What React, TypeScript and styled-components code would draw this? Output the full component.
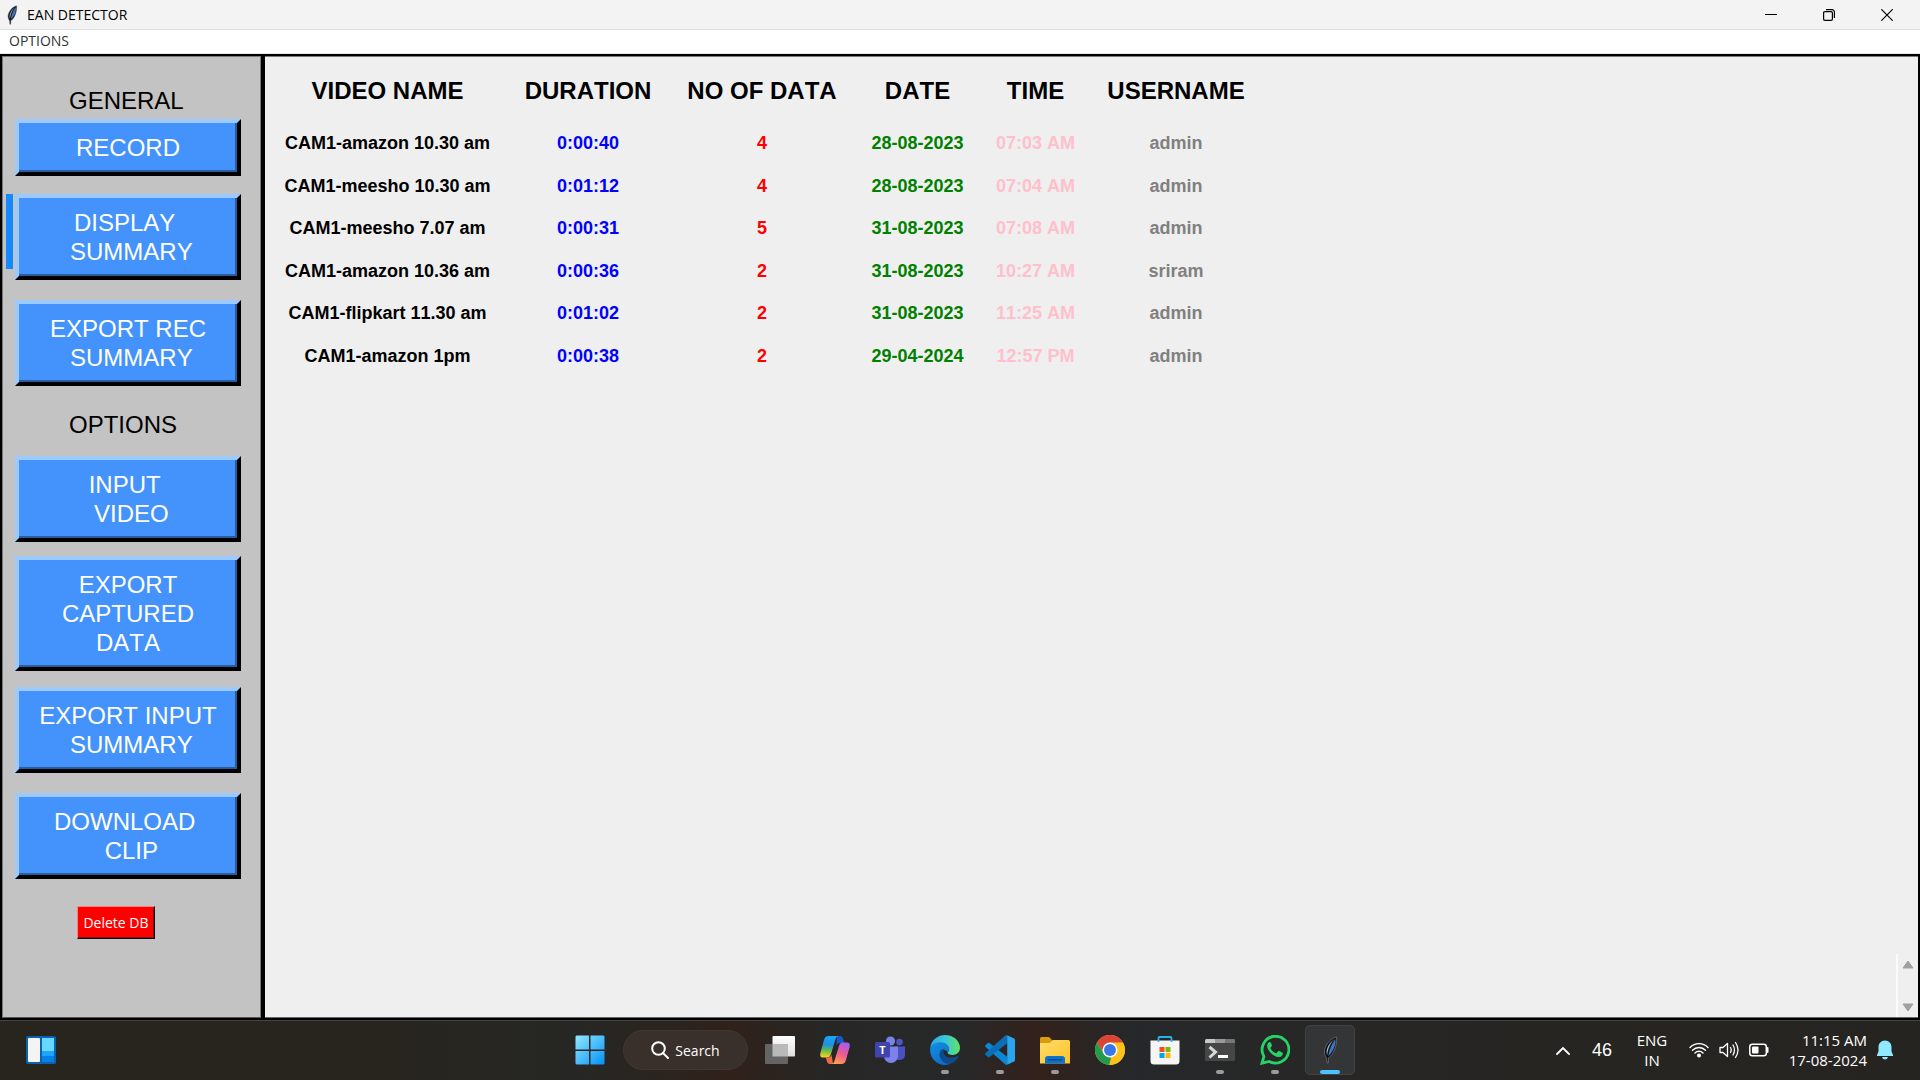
import React from "react";
import styled, { createGlobalStyle } from "styled-components";

const uiFont = `"Open Sans", "Noto Sans", sans-serif`;
const tkFont = `"Liberation Sans", Arial, sans-serif`;

const GlobalStyle = createGlobalStyle`
  * { box-sizing: border-box; }
  body { margin: 0; background: #000; font-family: ${uiFont}; font-kerning: none; }
  button { font: inherit; font-kerning: none; margin: 0; padding: 0; border: 0; background: none; color: inherit; }
  svg { display: block; }
`;

const Screen = styled.div`
  min-height: 100vh;
  display: grid;
  grid-template-rows: auto auto 1fr auto;
`;

/* ---------- window frame ---------- */

const TitleBar = styled.header`
  display: flex;
  align-items: center;
  height: 30px;
  padding: 0 4px 0 6px;
  background: #f3f3f3;
  border-bottom: 1px solid #dedede;
`;

const Title = styled.h1`
  flex: 1;
  margin: 0 0 0 9px;
  font-size: 14px;
  font-weight: 400;
  line-height: 28px;
  color: #000;
`;

const WindowButton = styled.button`
  width: 58px;
  height: 28px;
  display: grid;
  place-items: center;
`;

const MenuBar = styled.nav`
  display: flex;
  align-items: flex-start;
  height: 24px;
  padding-left: 9px;
  background: #fff;
  border-bottom: 1px solid #e8e8e8;
`;

const MenuItem = styled.button`
  font-size: 14px;
  line-height: 22px;
  color: #333;
`;

const Workspace = styled.div`
  display: flex;
  gap: 4px;
  padding: 2px;
  background: #000;
`;

/* ---------- sidebar ---------- */

const Sidebar = styled.aside`
  width: 259px;
  padding: 29px 0 0 3px;
  background: #c3c3c3;
  border: 1px solid #7a7a7a;
  border-bottom-color: #555;
  font-family: ${tkFont};
`;

const GroupTitle = styled.h2<{ $above: number; $below: number }>`
  margin: ${(p) => p.$above}px 0 ${(p) => p.$below}px 63px;
  font-size: 24px;
  font-weight: 400;
  line-height: 29px;
  color: #000;
`;

const ActionRow = styled.div<{ $below: number }>`
  display: flex;
  align-items: flex-start;
  gap: 2px;
  margin-bottom: ${(p) => p.$below}px;
`;

const Indicator = styled.span<{ $active?: boolean }>`
  width: 7px;
  height: 75px;
  margin-bottom: -20px;
  background: ${(p) => (p.$active ? "#158aff" : "transparent")};
`;

const ActionButton = styled.button`
  width: 226px;
  padding: 10px 0;
  border: 4px solid;
  border-color: #9ccaff #000 #000 #9ccaff;
  box-shadow: inset -2px -2px 0 #2b5c9e;
  background: #4492fb;
  color: #fff;
  font-size: 24px;
  line-height: 29px;
  text-align: center;
  white-space: pre;
`;

const DeleteButton = styled.button`
  margin-left: 71px;
  width: 78px;
  height: 33px;
  border: 1px solid;
  border-color: #ff8080 #000 #000 #ff8080;
  box-shadow: inset -1px -1px 0 #8a1010;
  background: #f00;
  color: #fff;
  font-family: ${uiFont};
  font-size: 14px;
  line-height: 28px;
`;

/* ---------- summary table ---------- */

const Main = styled.main`
  flex: 1;
  display: flex;
  justify-content: space-between;
  padding-left: 2px;
  background: #efefef;
  border-top: 1px solid #7a7a7a;
  border-bottom: 1px solid #666;
`;

const SummaryTable = styled.table`
  align-self: flex-start;
  width: 993px;
  height: 320px;
  table-layout: fixed;
  border-collapse: collapse;
  font-family: ${tkFont};
  text-align: center;
`;

const Column = styled.col<{ $width: number }>`
  width: ${(p) => p.$width}px;
`;

const HeadCell = styled.th`
  height: 65px;
  padding: 2px 0 0;
  font-size: 24px;
  font-weight: 700;
  line-height: 28px;
  white-space: nowrap;
  color: #000;
`;

const Cell = styled.td<{ $color: string }>`
  padding: 0;
  font-size: 18px;
  font-weight: 700;
  line-height: 22px;
  white-space: nowrap;
  color: ${(p) => p.$color};
`;

const ScrollBar = styled.div`
  align-self: flex-end;
  display: flex;
  flex-direction: column;
  justify-content: space-between;
  width: 22px;
  height: 63px;
  padding: 6px 0 5px;
  border-left: 2px solid #fbfbfb;
`;

const ScrollButton = styled.button`
  display: grid;
  place-items: center;
`;

/* ---------- taskbar ---------- */

const TaskBar = styled.footer`
  display: grid;
  grid-template-columns: 1fr auto 1fr;
  align-items: center;
  height: 60px;
  padding-bottom: 1px;
  border-top: 1px solid #444342;
  background: linear-gradient(
    90deg,
    #28251f 0%,
    #28251f 20%,
    #262724 30%,
    #2b241f 35%,
    #31211a 38%,
    #262725 43%,
    #272829 50%,
    #33211b 54%,
    #25282a 59%,
    #272727 66%,
    #272522 80%,
    #262421 100%
  );
  color: #fff;
`;

const TaskLeft = styled.div`
  padding-left: 16px;
`;

const TaskCenter = styled.div`
  display: flex;
  gap: 5px;
`;

const TaskButton = styled.button<{ $active?: boolean }>`
  position: relative;
  width: 50px;
  height: 50px;
  display: grid;
  place-items: center;
  border-radius: 5px;
  border: 1px solid ${(p) => (p.$active ? "#424344" : "transparent")};
  background: ${(p) => (p.$active ? "#343536" : "transparent")};
`;

const RunMark = styled.span<{ $active?: boolean }>`
  position: absolute;
  bottom: 0;
  left: 50%;
  width: ${(p) => (p.$active ? 20 : 8)}px;
  height: 4px;
  border-radius: 2px;
  transform: translateX(-50%);
  background: ${(p) => (p.$active ? "#4cc2ff" : "#9b9b9b")};
`;

const SearchButton = styled.button`
  display: flex;
  align-items: center;
  justify-content: center;
  gap: 6px;
  width: 125px;
  height: 40px;
  margin: 5px 2px 5px 3px;
  border-radius: 20px;
  border: 1px solid #403732;
  background: #3a302b;
  color: #fff;
  font-size: 14px;
`;

const Tray = styled.div`
  display: flex;
  align-items: center;
  justify-content: flex-end;
  padding-right: 27px;
  font-size: 15px;
  line-height: 20px;
`;

const Count = styled.span`
  margin: 0 22px;
  font-family: ${tkFont};
  font-size: 18px;
`;

const Language = styled.button`
  width: 36px;
  margin-right: 19px;
  text-align: center;
`;

const StatusIcons = styled.button`
  display: flex;
  align-items: center;
  gap: 10px;
`;

const Clock = styled.button`
  width: 88px;
  margin: 0 10px;
  text-align: right;
`;

/* ---------- icons ---------- */

const Feather = ({ w, h }: { w: number; h: number }) => (
  <svg width={w} height={h} viewBox="0 0 16 28" aria-hidden="true">
    <path d="M14.5 1C9 2 4 8 2.500 14c-.5 3 .5 6 2 8l.5 5 1.300-.2.2-5C10 20 13 14 14 9c.6-3 .8-6 .5-8z" fill="#101318" stroke="#777b80" strokeWidth=".7" />
    <path d="M13.500 2.800C9.500 5 6.200 11 5.200 19 3 14 7.500 5.500 13.500 2.800z" fill="#9bbbd8" />
    <path d="M13.400 3.200C10 7.500 7.300 13 6.300 20c3.500-3 6-7.500 6.900-12 .3-1.800.4-3.300.2-4.800z" fill="#3f78c4" />
  </svg>
);

const Windows = () => (
  <svg width="30" height="30" viewBox="0 0 30 30" aria-hidden="true">
    <defs>
      <linearGradient id="win" gradientUnits="userSpaceOnUse" x1="2" y1="2" x2="28" y2="28">
        <stop offset="0" stopColor="#8be4ff" />
        <stop offset="1" stopColor="#0a95f8" />
      </linearGradient>
    </defs>
    <path d="M1.500.5h12.500v14H.5v-13zM15.500.5h13l1 1v13h-14zM.5 16H14v13.500H1.500l-1-1zM15.500 16h14v12.500l-1 1h-13z" fill="url(#win)" />
  </svg>
);

const Widgets = () => (
  <svg width="30" height="28" viewBox="0 0 30 28" aria-hidden="true">
    <rect width="30" height="28" rx="2" fill="#0a63b0" />
    <rect x="2" y="2" width="12" height="24" rx="1" fill="#f4f4f4" />
    <rect x="16" y="2" width="12" height="13" fill="#67d8ff" />
    <rect x="16" y="15" width="12" height="5" fill="#1ea4f8" />
    <rect x="16" y="20" width="12" height="6" fill="#087fe6" />
  </svg>
);

const Magnifier = () => (
  <svg width="18" height="18" viewBox="0 0 18 18" fill="none" stroke="#fff" strokeWidth="2" aria-hidden="true">
    <circle cx="7.500" cy="7.500" r="6.300" />
    <path d="M12 12l5 5" strokeLinecap="round" />
  </svg>
);

const TaskView = () => (
  <svg width="30" height="28" viewBox="0 0 30 28" aria-hidden="true">
    <defs>
      <linearGradient id="tv" x1="0" y1="0" x2="0" y2="1">
        <stop offset="0" stopColor="#fff" />
        <stop offset="1" stopColor="#dedede" />
      </linearGradient>
    </defs>
    <rect x="7.500" y="0" width="22.500" height="20.500" rx="1" fill="url(#tv)" />
    <rect x="0" y="8" width="23" height="20" rx="1" fill="#646464" />
    <rect x="7.500" y="8" width="15.500" height="12.500" fill="#b9b9b9" />
  </svg>
);

const Copilot = () => (
  <svg width="30" height="28" viewBox="0 0 30 28" aria-hidden="true">
    <defs>
      <linearGradient id="cpA" x1=".4" y1="0" x2=".3" y2="1">
        <stop offset="0" stopColor="#16a8f5" />
        <stop offset=".4" stopColor="#1f8fe0" />
        <stop offset=".65" stopColor="#5cb85a" />
        <stop offset="1" stopColor="#ffd21a" />
      </linearGradient>
      <linearGradient id="cpB" x1=".7" y1="0" x2=".3" y2="1">
        <stop offset="0" stopColor="#a35cf0" />
        <stop offset=".5" stopColor="#ee5b8e" />
        <stop offset="1" stopColor="#ffa04a" />
      </linearGradient>
    </defs>
    <path d="M17 0h3c2 0 2.700 1.500 3.300 3.500L24.500 7H20c-2 0-3 1-3.600 3z" fill="#1b57c9" />
    <path d="M8.500 0H19c-2 0-3 1.500-3.600 3.500L11 18c-.8 2.500-2 3.500-4 3.500H3C.5 21.500-.3 19.500.4 17L4 4C4.700 1.500 6 0 8.500 0z" fill="url(#cpA)" />
    <path d="M13 28h-3c-2 0-2.700-1.500-3.300-3.500L5.700 21.500H8c2 0 3-1 3.600-3z" fill="#ef6b48" />
    <path d="M21.500 28H11c2 0 3-1.500 3.600-3.500L19 10c.8-2.500 2-3.500 4-3.500h4c2.500 0 3.300 2 2.600 4.500L26 24c-.7 2.500-2 4-4.500 4z" fill="url(#cpB)" />
  </svg>
);

const LetterMark = styled.span`
  position: absolute;
  left: 9px;
  top: 16px;
  width: 15px;
  font-size: 11px;
  font-weight: 700;
  line-height: 16px;
`;

const Teams = () => (
  <>
    <svg width="30" height="28" viewBox="0 0 30 28" aria-hidden="true">
      <circle cx="24.500" cy="6" r="3.300" fill="#4f55c4" />
      <path d="M20 10.500h10v8a5.500 5.500 0 0 1-8 5z" fill="#4a52c2" />
      <circle cx="15.500" cy="5" r="4.600" fill="#7b83eb" />
      <path d="M9 10.500h14V20a7 7 0 0 1-14 0z" fill="#7b83eb" />
      <rect x="0" y="6" width="15" height="15.500" rx="1.500" fill="#4045ae" />
    </svg>
    <LetterMark>T</LetterMark>
  </>
);

const Edge = () => (
  <svg width="30" height="30" viewBox="0 0 30 30" aria-hidden="true">
    <defs>
      <linearGradient id="edA" x1="0" y1=".3" x2="1" y2=".3">
        <stop offset="0" stopColor="#2aa7e8" />
        <stop offset=".5" stopColor="#36c6d8" />
        <stop offset="1" stopColor="#63e25e" />
      </linearGradient>
      <linearGradient id="edB" x1="0" y1="0" x2=".7" y2="1">
        <stop offset="0" stopColor="#1590de" />
        <stop offset="1" stopColor="#0b6ccb" />
      </linearGradient>
    </defs>
    <path d="M.2 13C1 5.500 7.300 0 15 0c8.500 0 15 6 15 12.800 0 4.500-3.300 7.200-7.500 7.200-3 0-5-1-5-2.200 0-.8 1.300-1.300 1.300-3.600 0-3.500-3.700-6.200-8.300-6.200C5 8 1.500 10.500.2 13z" fill="url(#edA)" />
    <path d="M.1 14C.3 10.500 5 7.300 10.500 7.300c5 0 8.700 3 8.700 6.700 0 2-1 3-1.200 3.700-.8-2-2.500-3-4.500-2-3 1.600-2.500 7.300 1.500 10.300 2.200 1.700 5 2 6.500 1.800C20 29.300 17.500 30 15 30 6.500 30-.3 23 .1 14z" fill="url(#edB)" />
    <path d="M10.600 15.500c-2.500 4-.6 9 3.200 11.700 4 2.700 8.500 1.800 11.500-1.200 1.500-1.500 2.500-3 3-4.200.2-.7-.4-1-1-.7-6 3.200-13 1-13.800-3.500-.3-1.800.5-3 1.300-3.700-1.700 0-3.200.3-4.200 1.600z" fill="#114a8b" />
  </svg>
);

const VsCode = () => (
  <svg width="30" height="30" viewBox="0 0 30 30" aria-hidden="true">
    <path d="M22.200 29.700v-7.900L4.500 8c-.5-.4-1.100-.4-1.600 0L.6 10c-.7.600-.7 1.500 0 2.100l19.700 17.300c.5.500 1.200.6 1.900.3z" fill="#0d86d3" />
    <path d="M22.200.3v7.900L4.500 22c-.5.400-1.100.4-1.600 0L.6 20c-.7-.6-.7-1.500 0-2.100L20.300.6c.5-.5 1.200-.6 1.900-.3z" fill="#0a6fb8" />
    <path d="M22.200.3L29 3.500c.6.300 1 .8 1 1.500v20c0 .7-.4 1.200-1 1.500l-6.800 3.200z" fill="#2aa5ee" />
  </svg>
);

const Folder = () => (
  <svg width="30" height="27" viewBox="0 0 30 27" aria-hidden="true">
    <defs>
      <linearGradient id="fo" x1="0" y1="0" x2="1" y2="1">
        <stop offset="0" stopColor="#ffdc6a" />
        <stop offset="1" stopColor="#ffc328" />
      </linearGradient>
    </defs>
    <path d="M0 1.500Q0 0 1.500 0H9l3.500 3.500V9H0z" fill="#d99c0c" />
    <path d="M0 6h9.500L13 3h15.500Q30 3 30 4.500V26.500H0z" fill="url(#fo)" />
    <path d="M5 26.500V22q0-3 3-3h14q3 0 3 3v4.500z" fill="#0b73cb" />
    <rect x="8" y="22" width="14" height="1.500" rx=".7" fill="#0a4a8c" />
  </svg>
);

const Chrome = () => (
  <svg width="30" height="30" viewBox="0 0 30 30" aria-hidden="true">
    <circle cx="15" cy="15" r="15" fill="#fbc116" />
    <path d="M15 15L9.100 18.600 2 7.500A15 15 0 0 1 28 7.500H15z" fill="#db4437" />
    <path d="M2 7.500l7 11.200L15 22l1 1-1.800 7A15 15 0 0 1 2 7.500z" fill="#269a4c" />
    <path d="M15 8h13.200a15 15 0 0 1-13.500 22L21 18.500z" fill="#fcc219" />
    <circle cx="15" cy="15" r="7.500" fill="#fff" />
    <circle cx="15" cy="15" r="6" fill="#3877e8" />
  </svg>
);

const Store = () => (
  <svg width="30" height="30" viewBox="0 0 30 30" aria-hidden="true">
    <path d="M.5 5.500h29V26q0 3.500-3.500 3.500H4Q.5 29.500.5 26z" fill="#f5f5f5" />
    <path d="M8.500 7V3q0-1 1-1h11q1 0 1 1v4" fill="none" stroke="#24b4ec" strokeWidth="1.800" />
    <rect x="9.500" y="12" width="5" height="5" fill="#f25022" />
    <rect x="15.500" y="12" width="5" height="5" fill="#7fba00" />
    <rect x="9.500" y="18" width="5" height="5" fill="#00a4ef" />
    <rect x="15.500" y="18" width="5" height="5" fill="#ffb900" />
  </svg>
);

const Terminal = () => (
  <svg width="30" height="22" viewBox="0 0 30 22" aria-hidden="true">
    <rect width="30" height="22" rx="1.500" fill="#464646" />
    <path d="M0 4V1.500Q0 0 1.500 0H10v4z" fill="#c8c8c8" />
    <path d="M10 0h10v4H10z" fill="#999" />
    <path d="M20 0h8.500Q30 0 30 1.500V4H20z" fill="#777" />
    <path d="M4.500 8l6 5-6 5.500" fill="none" stroke="#d7d7d7" strokeWidth="3" />
    <rect x="13" y="16" width="10" height="3" fill="#fff" />
  </svg>
);

const WhatsApp = () => (
  <svg width="30" height="30" viewBox="0 0 30 30" aria-hidden="true">
    <path d="M2 28.200l1.900-6.800A13.400 13.400 0 1 1 9 26.400z" fill="none" stroke="#25d366" strokeWidth="2.800" />
    <path d="M10.800 7.500c-.4-.8-1.500-.8-2.200 0-3.200 3.400-.4 7.800 2.200 10.500 3 3.200 8.500 6.200 11.500 2.200.8-1.200.6-2.200 0-2.600l-3-1.500c-.6-.3-1-.2-1.400.3l-1.200 1.500c-.3.400-.7.400-1.200.2-2.200-1-3.700-2.500-4.900-4.600-.2-.4-.2-.7.1-1l1-1.300c.3-.4.3-.8.100-1.200z" fill="#25d366" />
  </svg>
);

const Wifi = () => (
  <svg width="20" height="16" viewBox="0 0 20 16" fill="none" stroke="#fff" strokeWidth="1.400" strokeLinecap="round" aria-hidden="true">
    <path d="M1 5.500a12.500 12.500 0 0 1 18 0M3.500 8.300a9 9 0 0 1 13 0M6 11a5.600 5.600 0 0 1 8 0" />
    <circle cx="10" cy="13.500" r="1.300" fill="#fff" />
  </svg>
);

const Volume = () => (
  <svg width="20" height="18" viewBox="0 0 20 18" fill="none" stroke="#fff" strokeWidth="1.300" strokeLinecap="round" strokeLinejoin="round" aria-hidden="true">
    <path d="M1 6.500h3L8.500 2.500v13L4 11.500H1zM11.500 6.500q1.500 2.500 0 5M14 4q3 5 0 10M16.500 1.500q5 7.500 0 15" />
  </svg>
);

const Battery = () => (
  <svg width="20" height="14" viewBox="0 0 20 14" aria-hidden="true">
    <rect x=".8" y="1.300" width="16.500" height="11.500" rx="2.500" fill="none" stroke="#fff" strokeWidth="1.500" />
    <rect x="3" y="3.500" width="6.500" height="7" rx="1" fill="#fff" />
    <path d="M18.500 5v4" stroke="#fff" strokeWidth="2" strokeLinecap="round" />
  </svg>
);

const Bell = () => (
  <svg width="16" height="20" viewBox="0 0 16 20" aria-hidden="true">
    <path d="M8 .5c4 0 6.500 3 6.500 6.500v4.500L16 15v1H0v-1l1.500-3.500V7C1.500 3.500 4 .5 8 .5zM5 17h6q-.7 2.500-3 2.500T5 17z" fill="#8fe9ff" />
  </svg>
);

/* ---------- data ---------- */

type Action = { label: string; below: number; active?: boolean };

const generalActions: Action[] = [
  { label: "RECORD", below: 18 },
  { label: "DISPLAY \n SUMMARY", below: 20, active: true },
  { label: "EXPORT REC\n SUMMARY", below: 0 },
];

const optionActions: Action[] = [
  { label: "INPUT \n VIDEO", below: 14 },
  { label: "EXPORT\nCAPTURED\nDATA", below: 16 },
  { label: "EXPORT INPUT\n SUMMARY", below: 20 },
  { label: "DOWNLOAD \n CLIP", below: 27 },
];

const columns = [
  { title: "VIDEO NAME", width: 241, color: "#000" },
  { title: "DURATION", width: 160, color: "#0000ff" },
  { title: "NO OF DATA", width: 188, color: "#ff0000" },
  { title: "DATE", width: 123, color: "#008000" },
  { title: "TIME", width: 113, color: "#ffc0cb" },
  { title: "USERNAME", width: 168, color: "#808080" },
];

const rows = [
  ["CAM1-amazon 10.30 am", "0:00:40", "4", "28-08-2023", "07:03 AM", "admin"],
  ["CAM1-meesho 10.30 am", "0:01:12", "4", "28-08-2023", "07:04 AM", "admin"],
  ["CAM1-meesho 7.07 am", "0:00:31", "5", "31-08-2023", "07:08 AM", "admin"],
  ["CAM1-amazon 10.36 am", "0:00:36", "2", "31-08-2023", "10:27 AM", "sriram"],
  ["CAM1-flipkart 11.30 am", "0:01:02", "2", "31-08-2023", "11:25 AM", "admin"],
  ["CAM1-amazon 1pm", "0:00:38", "2", "29-04-2024", "12:57 PM", "admin"],
];

const apps = [
  { name: "Task view", icon: <TaskView />, running: false },
  { name: "Copilot", icon: <Copilot />, running: false },
  { name: "Teams", icon: <Teams />, running: false },
  { name: "Edge", icon: <Edge />, running: true },
  { name: "Visual Studio Code", icon: <VsCode />, running: true },
  { name: "File Explorer", icon: <Folder />, running: true },
  { name: "Chrome", icon: <Chrome />, running: false },
  { name: "Store", icon: <Store />, running: false },
  { name: "Terminal", icon: <Terminal />, running: true },
  { name: "WhatsApp", icon: <WhatsApp />, running: true },
  { name: "EAN Detector", icon: <Feather w={16} h={28} />, running: true, active: true },
];

const ActionList = ({ actions }: { actions: Action[] }) => (
  <>
    {actions.map((a) => (
      <ActionRow key={a.label} $below={a.below}>
        <Indicator $active={a.active} />
        <ActionButton type="button">{a.label}</ActionButton>
      </ActionRow>
    ))}
  </>
);

export default function App() {
  return (
    <Screen>
      <GlobalStyle />
      <TitleBar>
        <Feather w={12} h={20} />
        <Title>EAN DETECTOR</Title>
        <WindowButton type="button" aria-label="Minimize">
          <svg width="12" height="12" viewBox="0 0 12 12" stroke="#000"><path d="M0 5.500h12" /></svg>
        </WindowButton>
        <WindowButton type="button" aria-label="Restore">
          <svg width="12" height="12" viewBox="0 0 12 12" fill="none" stroke="#000" strokeWidth="1.200">
            <rect x=".6" y="2.600" width="8.800" height="8.800" rx="1.300" />
            <path d="M3 .6h6a2.400 2.400 0 0 1 2.400 2.400v6" />
          </svg>
        </WindowButton>
        <WindowButton type="button" aria-label="Close">
          <svg width="12" height="12" viewBox="0 0 12 12" stroke="#000" strokeWidth="1.200"><path d="M.3.3l11.400 11.400M11.700.3L.3 11.700" /></svg>
        </WindowButton>
      </TitleBar>
      <MenuBar>
        <MenuItem type="button">OPTIONS</MenuItem>
      </MenuBar>
      <Workspace>
        <Sidebar>
          <GroupTitle $above={0} $below={4}>GENERAL</GroupTitle>
          <ActionList actions={generalActions} />
          <GroupTitle $above={24} $below={17}>OPTIONS</GroupTitle>
          <ActionList actions={optionActions} />
          <DeleteButton type="button">Delete DB</DeleteButton>
        </Sidebar>
        <Main>
          <SummaryTable>
            <colgroup>
              {columns.map((c) => <Column key={c.title} $width={c.width} />)}
            </colgroup>
            <thead>
              <tr>{columns.map((c) => <HeadCell key={c.title} scope="col">{c.title}</HeadCell>)}</tr>
            </thead>
            <tbody>
              {rows.map((r) => (
                <tr key={r[0]}>
                  {r.map((v, i) => <Cell key={i} $color={columns[i].color}>{v}</Cell>)}
                </tr>
              ))}
            </tbody>
          </SummaryTable>
          <ScrollBar>
            <ScrollButton type="button" aria-label="Scroll up">
              <svg width="12" height="9" viewBox="0 0 12 9"><path d="M6 1l5 7H1z" fill="#a0a0a0" stroke="#a0a0a0" strokeLinejoin="round" /></svg>
            </ScrollButton>
            <ScrollButton type="button" aria-label="Scroll down">
              <svg width="12" height="9" viewBox="0 0 12 9"><path d="M6 8l5-7H1z" fill="#a0a0a0" stroke="#a0a0a0" strokeLinejoin="round" /></svg>
            </ScrollButton>
          </ScrollBar>
        </Main>
      </Workspace>
      <TaskBar>
        <TaskLeft>
          <TaskButton type="button" aria-label="Widgets"><Widgets /></TaskButton>
        </TaskLeft>
        <TaskCenter>
          <TaskButton type="button" aria-label="Start"><Windows /></TaskButton>
          <SearchButton type="button"><Magnifier />Search</SearchButton>
          {apps.map((a) => (
            <TaskButton key={a.name} type="button" aria-label={a.name} $active={a.active}>
              {a.icon}
              {a.running && <RunMark $active={a.active} />}
            </TaskButton>
          ))}
        </TaskCenter>
        <Tray>
          <svg width="14" height="9" viewBox="0 0 14 9" fill="none" stroke="#fff" strokeWidth="1.800" strokeLinecap="round"><path d="M1 8l6-6 6 6" /></svg>
          <Count>46</Count>
          <Language type="button">ENG<br />IN</Language>
          <StatusIcons type="button" aria-label="Network, volume and battery"><Wifi /><Volume /><Battery /></StatusIcons>
          <Clock type="button">11:15 AM<br />17-08-2024</Clock>
          <Bell />
        </Tray>
      </TaskBar>
    </Screen>
  );
}
